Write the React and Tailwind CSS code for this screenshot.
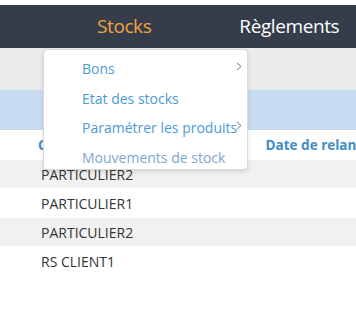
import React from "react";

const rows = [
  { name: "PARTICULIER2", h: "h-[28px]", bg: "bg-[#f1f1f1]" },
  { name: "PARTICULIER1", h: "h-[30px]", bg: "bg-white" },
  { name: "PARTICULIER2", h: "h-[28px]", bg: "bg-[#f1f1f1]" },
  { name: "RS CLIENT1", h: "h-[30px]", bg: "bg-white" },
];

const menu = [
  { label: "Bons", sub: true, color: "text-[#4b9ad6]" },
  { label: "Etat des stocks", color: "text-[#4b9ad6]" },
  { label: "Paramétrer les produits", sub: true, color: "text-[#4b9ad6]" },
  { label: "Mouvements de stock", color: "text-[#7ea7cf]" },
];

export default function App() {
  return (
    <div className="relative w-[356px] h-[312px] overflow-hidden bg-white font-['Open_Sans',sans-serif]">
      <div className="h-[5px] bg-white" />
      {/* Navbar */}
      <div className="h-[43px] bg-[#353d4b] flex items-center">
        <span className="ml-[97px] text-[19px] text-[#f0a33f] tracking-[-0.4px]">Stocks</span>
        <span className="ml-[88px] text-[19px] text-white tracking-[-0.4px]">Règlements</span>
      </div>
      <div className="h-[42px] bg-[#ebebeb]" />
      <div className="h-[40px] bg-[#c7dcf1]" />
      {/* table header */}
      <div className="h-[30px] flex items-center text-[13.5px] font-bold text-[#3b8dc9] whitespace-nowrap">
        <span className="ml-[38px]">C</span>
        <span className="ml-[219px]">Date de relance</span>
      </div>
      {rows.map((r, i) => (
        <div key={i} className={`${r.h} ${r.bg} flex items-center pl-[41px] text-[14px] text-[#333]`}>
          {r.name}
        </div>
      ))}

      {/* Dropdown */}
      <div className="absolute left-[43px] top-[49px] w-[205px] h-[121px] bg-white rounded-[4px] border border-[#d9d9d9] shadow-[0_2px_4px_rgba(0,0,0,0.12)] pt-[4px]">
        {menu.map((m) => (
          <div key={m.label} className="relative h-[29.6px] flex items-center pl-[38px] text-[14px] whitespace-nowrap">
            <span className={m.color}>{m.label}</span>
            {m.sub && (
              <svg className="absolute right-[5px] top-[8px]" width="6" height="9" viewBox="0 0 6 9">
                <path d="M1 1 L5 4.5 L1 8" fill="none" stroke="#777" strokeWidth="1" />
              </svg>
            )}
          </div>
        ))}
      </div>
    </div>
  );
}
